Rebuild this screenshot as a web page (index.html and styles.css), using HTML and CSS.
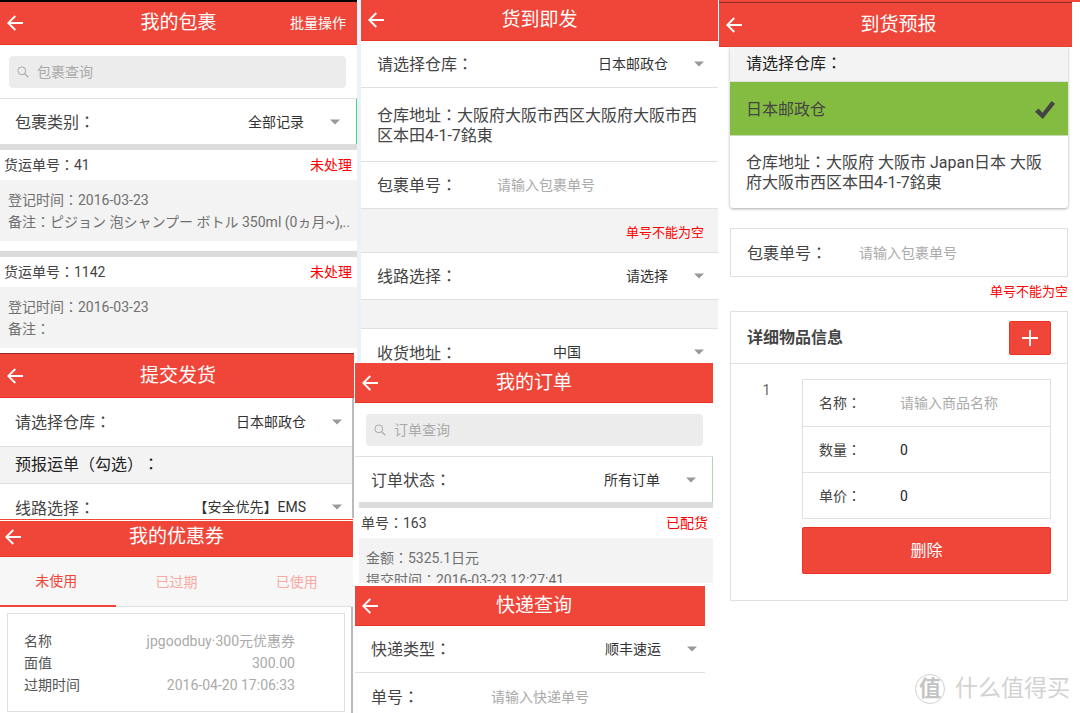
FILE: index.html
```html
<!DOCTYPE html>
<html lang="zh-CN">
<head>
<meta charset="utf-8">
<title>我的包裹</title>
<link rel="stylesheet" href="styles.css">
</head>
<body>
<svg class="defs" aria-hidden="true">
  <symbol id="back" viewBox="0 0 16 16"><path d="M8.3 1 1.3 8l7 7M1.5 8H16" fill="none" stroke="currentColor" stroke-width="1.8"/></symbol>
  <symbol id="caret" viewBox="0 0 10 6"><path d="M0 .5h10L5 5.5z" fill="#999"/></symbol>
  <symbol id="search" viewBox="0 0 12 12"><circle cx="4.8" cy="4.8" r="3.9" fill="none" stroke="#a8a8a8"/><path d="m7.6 7.6 3.6 3.6" stroke="#a8a8a8" stroke-width="1.3"/></symbol>
</svg>
<main class="board">
  <div class="column">
    <section class="screen parcels">
      <header class="bar">
        <button class="back" aria-label="返回"><svg><use href="#back"/></svg></button>
        <h2>我的包裹</h2>
        <button class="action">批量操作</button>
      </header>
      <div class="search-area">
        <label class="search"><svg><use href="#search"/></svg><input type="search" placeholder="包裹查询" aria-label="包裹查询"></label>
      </div>
      <div class="row filter green-edge">
        <label for="type">包裹类别<span class="fw" lang="zh-TW">：</span></label>
        <select id="type"><option>全部记录</option></select>
        <svg class="caret"><use href="#caret"/></svg>
      </div>
      <div class="divider"></div>
      <article>
        <div class="item-head"><span>货运单号<span class="fw" lang="zh-TW">：</span>41</span><span class="status">未处理</span></div>
        <div class="item-body">
          <p>登记时间<span class="fw" lang="zh-TW">：</span>2016-03-23</p>
          <p class="note">备注<span class="fw" lang="zh-TW">：</span>ピジョン 泡シャンプー ボトル 350ml (0ヵ月~),..</p>
        </div>
      </article>
      <div class="divider spaced"></div>
      <article>
        <div class="item-head"><span>货运单号<span class="fw" lang="zh-TW">：</span>1142</span><span class="status">未处理</span></div>
        <div class="item-body">
          <p>登记时间<span class="fw" lang="zh-TW">：</span>2016-03-23</p>
          <p>备注<span class="fw" lang="zh-TW">：</span></p>
        </div>
      </article>
    </section>

    <section class="screen submit">
      <header class="bar">
        <button class="back" aria-label="返回"><svg><use href="#back"/></svg></button>
        <h2>提交发货</h2>
      </header>
      <div class="scroll-edge">
        <div class="row">
          <label for="store1">请选择仓库<span class="fw" lang="zh-TW">：</span></label>
          <select id="store1"><option>日本邮政仓</option></select>
          <svg class="caret"><use href="#caret"/></svg>
        </div>
        <h3 class="subhead">预报运单<span class="fw" lang="zh-TW">（</span>勾选<span class="fw" lang="zh-TW">）：</span></h3>
        <div class="row cut">
          <label for="line1">线路选择<span class="fw" lang="zh-TW">：</span></label>
          <select id="line1"><option>【安全优先】EMS</option></select>
          <svg class="caret"><use href="#caret"/></svg>
        </div>
      </div>
    </section>

    <section class="screen coupons">
      <header class="bar">
        <button class="back" aria-label="返回"><svg><use href="#back"/></svg></button>
        <h2>我的优惠券</h2>
      </header>
      <nav class="tabs">
        <button class="tab active">未使用</button>
        <button class="tab">已过期</button>
        <button class="tab">已使用</button>
      </nav>
      <div class="coupon-wrap">
        <dl class="coupon">
          <div><dt>名称</dt><dd>jpgoodbuy·300元优惠券</dd></div>
          <div><dt>面值</dt><dd>300.00</dd></div>
          <div><dt>过期时间</dt><dd>2016-04-20 17:06:33</dd></div>
        </dl>
      </div>
    </section>
  </div>

  <div class="column">
    <section class="screen instant">
      <header class="bar">
        <button class="back" aria-label="返回"><svg><use href="#back"/></svg></button>
        <h2>货到即发</h2>
      </header>
      <div class="row">
        <label for="store2">请选择仓库<span class="fw" lang="zh-TW">：</span></label>
        <select id="store2"><option>日本邮政仓</option></select>
        <svg class="caret"><use href="#caret"/></svg>
      </div>
      <p class="address">仓库地址<span class="fw" lang="zh-TW">：</span>大阪府大阪市西区大阪府大阪市西区本田4-1-7銘東</p>
      <div class="row">
        <label class="wide" for="no1">包裹单号<span class="fw" lang="zh-TW">：</span></label>
        <input id="no1" type="text" placeholder="请输入包裹单号">
      </div>
      <p class="strip error">单号不能为空</p>
      <div class="row">
        <label for="line2">线路选择<span class="fw" lang="zh-TW">：</span></label>
        <select id="line2"><option>请选择</option></select>
        <svg class="caret"><use href="#caret"/></svg>
      </div>
      <div class="strip thin"></div>
      <div class="row cut">
        <label for="addr">收货地址<span class="fw" lang="zh-TW">：</span></label>
        <select id="addr" class="country"><option>中国</option></select>
        <svg class="caret"><use href="#caret"/></svg>
      </div>
    </section>

    <section class="screen orders">
      <header class="bar">
        <button class="back" aria-label="返回"><svg><use href="#back"/></svg></button>
        <h2>我的订单</h2>
      </header>
      <div class="search-area">
        <label class="search"><svg><use href="#search"/></svg><input type="search" placeholder="订单查询" aria-label="订单查询"></label>
      </div>
      <div class="row filter green-edge pale">
        <label for="state">订单状态<span class="fw" lang="zh-TW">：</span></label>
        <select id="state"><option>所有订单</option></select>
        <svg class="caret"><use href="#caret"/></svg>
      </div>
      <div class="order">
        <div class="divider"></div>
        <div class="item-head"><span>单号<span class="fw" lang="zh-TW">：</span>163</span><span class="status">已配货</span></div>
        <div class="item-body">
          <p>金额<span class="fw" lang="zh-TW">：</span>5325.1日元</p>
          <p>提交时间<span class="fw" lang="zh-TW">：</span>2016-03-23 12:27:41</p>
        </div>
      </div>
    </section>

    <section class="screen express">
      <header class="bar">
        <button class="back" aria-label="返回"><svg><use href="#back"/></svg></button>
        <h2>快递查询</h2>
      </header>
      <div class="row">
        <label for="courier">快递类型<span class="fw" lang="zh-TW">：</span></label>
        <select id="courier"><option>顺丰速运</option></select>
        <svg class="caret"><use href="#caret"/></svg>
      </div>
      <div class="row last">
        <label class="wide" for="no2">单号<span class="fw" lang="zh-TW">：</span></label>
        <input id="no2" type="text" placeholder="请输入快递单号">
      </div>
    </section>
  </div>

  <div class="column">
    <section class="screen forecast">
      <header class="bar">
        <button class="back" aria-label="返回"><svg><use href="#back"/></svg></button>
        <h2>到货预报</h2>
      </header>
      <div class="forecast-body">
        <div class="store-card">
          <h3 class="subhead">请选择仓库<span class="fw" lang="zh-TW">：</span></h3>
          <button class="choice">日本邮政仓
            <svg viewBox="0 0 20 18"><path d="m0 10.8 3.6-3.3 3.9 4.2L16.6 0 20 2.8 7.8 18z" fill="#444"/></svg>
          </button>
          <p class="address">仓库地址<span class="fw" lang="zh-TW">：</span>大阪府 大阪市 Japan日本 大阪府大阪市西区本田4-1-7銘東</p>
        </div>
        <div class="row boxed">
          <label class="wide" for="no3">包裹单号<span class="fw" lang="zh-TW">：</span></label>
          <input id="no3" type="text" placeholder="请输入包裹单号">
        </div>
        <p class="error below">单号不能为空</p>
        <div class="goods">
          <div class="goods-head">
            <h3>详细物品信息</h3>
            <button class="add" aria-label="添加"><svg viewBox="0 0 16 16"><path d="M8 0v16M0 8h16" stroke="#fff" stroke-width="1.8"/></svg></button>
          </div>
          <div class="goods-item">
            <span class="index">1</span>
            <div class="fields">
              <div class="field-list">
                <div class="field"><label for="gname">名称<span class="fw" lang="zh-TW">：</span></label><input id="gname" type="text" placeholder="请输入商品名称"></div>
                <div class="field"><label for="gnum">数量<span class="fw" lang="zh-TW">：</span></label><input id="gnum" type="text" value="0"></div>
                <div class="field"><label for="gprice">单价<span class="fw" lang="zh-TW">：</span></label><input id="gprice" type="text" value="0"></div>
              </div>
              <button class="delete">删除</button>
            </div>
          </div>
        </div>
      </div>
    </section>
    <footer class="brand">
      <span class="seal">值</span>
      <span>什么值得买</span>
    </footer>
  </div>
</main>
</body>
</html>
```

FILE: styles.css
```css
* { box-sizing: border-box; }

body, h2, h3, p, dl, dd { margin: 0; }

body {
  background: #fff;
  color: #444;
  font: 14px/22px Roboto, "Noto Sans CJK SC", sans-serif;
  text-spacing-trim: space-all;
  overflow: hidden;
}

button, input, select {
  border: 0;
  border-radius: 0;
  padding: 0;
  margin: 0;
  background: none;
  color: inherit;
  font: inherit;
  outline: 0;
  appearance: none;
}

input::placeholder { color: #aaa; opacity: 1; }

.defs { position: absolute; width: 0; height: 0; }

/* full-width punctuation centred in its em box */
.fw { font-family: "Noto Sans CJK TC", sans-serif; line-height: 1; }

.board {
  display: grid;
  grid-template-columns: 355fr 364fr 361fr;
  min-height: 100vh;
}

.column { display: flex; flex-direction: column; min-width: 0; }

/* header bar */
.bar {
  display: grid;
  grid-template-columns: 70px 1fr 70px;
  align-items: center;
  height: 40px;
  background: #f04639;
  border-bottom: 1px solid #ec3323;
  color: #fff;
}
.bar h2 { font-size: 19px; font-weight: 400; line-height: 24px; text-align: center; }
.back { justify-self: start; padding-left: 7px; line-height: 0; }
.back svg { width: 16px; height: 16px; }
.action { justify-self: end; padding-right: 11px; white-space: nowrap; }

/* rows */
.row {
  display: flex;
  align-items: center;
  height: 47px;
  padding: 0 14px 0 16px;
  background: #fff;
  border-bottom: 1px solid #e0e0e0;
}
.row label { flex: none; padding-top: 2px; font-size: 16px; }
.row label.wide { width: 120px; }
.row input { flex: 1; min-width: 0; }
.row select { flex: 1; min-width: 0; padding-right: 26px; text-align-last: right; color: #333; }
.row select.country { padding-right: 113px; }
.row.cut { border-bottom: 0; overflow: hidden; align-items: flex-start; height: 34px; padding-top: 12px; }
.row.cut .caret { margin-top: 8px; }
.caret { flex: none; width: 10px; height: 6px; }

.subhead {
  height: 37px;
  padding-left: 16px;
  background: #f3f3f3;
  border-bottom: 1px solid #e0e0e0;
  color: #222;
  font-size: 16px;
  font-weight: 400;
  line-height: 36px;
}
.address { padding: 17px 16px 15px; font-size: 16px; line-height: 20px; }
.error { color: #f00; font-size: 13px; text-align: right; }
.status { color: #f00; }

/* search and lists */
.search-area { padding: 11px 10px 10px 11px; border-bottom: 1px solid #e0e0e0; }
.search {
  display: flex;
  align-items: center;
  gap: 8px;
  height: 32px;
  padding: 0 8px;
  border-radius: 4px;
  background: #ececec;
}
.search svg { width: 12px; height: 12px; }
.search input { flex: 1; min-width: 0; }
.filter { height: 45px; padding-left: 16px; padding-right: 16px; border-bottom: 0; }
.green-edge { border-right: 1px solid #4bd479; }
.green-edge.pale { border-color: #a5dcb5; }
.divider { height: 6px; background: #dcdcdc; }
.divider.spaced { margin-top: 10px; }
.item-head {
  display: flex;
  justify-content: space-between;
  padding: 4px 5px 4px 4px;
}
.item-body { padding: 9px 0 8px 8px; background: #f3f3f3; color: #707070; }
.note { white-space: nowrap; overflow: hidden; }

/* parcels */
.parcels { position: relative; z-index: 1; margin-right: -2px; border-top: 2px solid #000; background: #fff; }
.parcels .bar { height: 43px; }
.parcels .search-area { padding-left: 9px; padding-right: 11px; }
.parcels .filter { padding-left: 15px; }

/* submit */
.submit { margin-top: 5px; margin-right: 1px; border-top: 1px solid #8c2a24; }
.submit .bar { height: 44px; }
.submit .bar h2 { padding-left: 2px; }
.submit .row { height: 49px; padding: 0 10px 0 15px; }
.submit .row select { padding-right: 26px; }
.submit .row.cut { height: 34px; padding-top: 12px; }
.submit .subhead { padding-left: 15px; }
.scroll-edge { border-right: 2px solid #bbb; }

/* coupons */
.coupons { flex: 1; display: flex; flex-direction: column; margin: 1px 2px 0 0; border-top: 1px solid #f04639; overflow: hidden; }
.coupons .bar { height: 36px; margin-top: 1px; padding-bottom: 4px; }
.coupons .back { padding-left: 5px; }
.tabs { display: flex; margin: 0 -4px; background: #f7f7f7; }
.tab { flex: 1; height: 50px; border-bottom: 1px solid #e0e0e0; color: #f7aaa3; }
.tab.active { border-bottom: 2px solid #f04639; color: #f04639; }
.coupon-wrap { flex: 1; padding: 6px 6px 0 7px; border-right: 2px solid #bbb; }
.coupon { padding: 16px 49px 15px 16px; border: 1px solid #e0e0e0; }
.coupon div { display: flex; justify-content: space-between; }
.coupon dt { color: #555; }
.coupon dd { color: #aaa; }

/* instant */
.instant { margin: 0 1px 0 2px; border-left: 4px solid #ebf1fa; }
.instant .bar { height: 41px; }
.instant .address { padding: 18px 16px 15px; border-bottom: 1px solid #e0e0e0; }
.strip { height: 44px; padding: 0 14px; background: #f3f3f3; border-bottom: 1px solid #e0e0e0; line-height: 48px; }
.strip.thin { height: 29px; }

/* orders */
.orders { margin-right: 6px; }
.orders .order { margin-left: 4px; height: 81px; overflow: hidden; }
.order .item-head { padding-left: 2px; }
.order .item-body { padding-left: 7px; }

/* express */
.express { margin: 3px 14px 0 0; }
.express .bar h2 { padding-left: 8px; }
.express .row { padding: 0 8px 0 16px; }
.express .row.last { border-bottom: 0; }

/* forecast */
.forecast { border-top: 2px solid #f04639; }
.forecast > .bar { height: 45px; margin-right: 8px; border-top: 1px solid #8c2a24; }
.forecast > .bar h2 { padding-left: 6px; }
.forecast-body { padding: 0 12px 0 11px; }
.store-card { border-radius: 0 0 3px 3px; box-shadow: 0 1px 3px #aaa; }
.store-card .subhead { height: 35px; line-height: 33px; }
.choice {
  display: flex;
  justify-content: space-between;
  align-items: center;
  width: 100%;
  height: 54px;
  padding: 2px 13px 0 16px;
  background: #84bc41;
  border-bottom: 1px solid #c8d8b5;
  font-size: 16px;
}
.choice svg { width: 20px; height: 18px; }
.row.boxed { height: 49px; margin-top: 20px; padding-left: 16px; border: 1px solid #e0e0e0; }
.row.boxed label.wide { width: 112px; }
.below { padding: 4px 0 8px; }
.goods { border: 1px solid #e0e0e0; }
.goods-head {
  display: flex;
  justify-content: space-between;
  align-items: center;
  height: 52px;
  padding: 0 16px;
  border-bottom: 1px solid #e0e0e0;
}
.goods-head h3 { font-size: 16px; font-weight: 700; }
.add, .delete { background: #f04639; border: 1px solid #ec3323; border-radius: 2px; color: #fff; }
.add { width: 42px; height: 34px; line-height: 0; }
.add svg { width: 16px; height: 16px; }
.goods-item { display: flex; padding: 15px 16px 26px 0; }
.index { flex: none; width: 71px; text-align: center; color: #666; }
.fields { flex: 1; min-width: 0; }
.field-list { border: 1px solid #e0e0e0; }
.field { display: flex; align-items: center; height: 46px; padding-left: 16px; }
.field + .field { border-top: 1px solid #e0e0e0; }
.field label { flex: none; width: 81px; }
.field input { flex: 1; min-width: 0; color: #222; }
.delete { display: block; width: 100%; height: 47px; margin-top: 8px; font-size: 16px; }

/* brand mark */
.brand {
  display: flex;
  align-items: center;
  gap: 10px;
  margin: auto 10px 10px auto;
  padding-bottom: 5px;
  color: #d2d2d2;
  font-size: 23px;
  line-height: 32px;
}
.seal {
  width: 30px;
  height: 30px;
  border: 1px solid #d2d2d2;
  border-radius: 50%;
  color: #c4c4c4;
  font-size: 22px;
  font-weight: 700;
  line-height: 28px;
  text-align: center;
}
```
